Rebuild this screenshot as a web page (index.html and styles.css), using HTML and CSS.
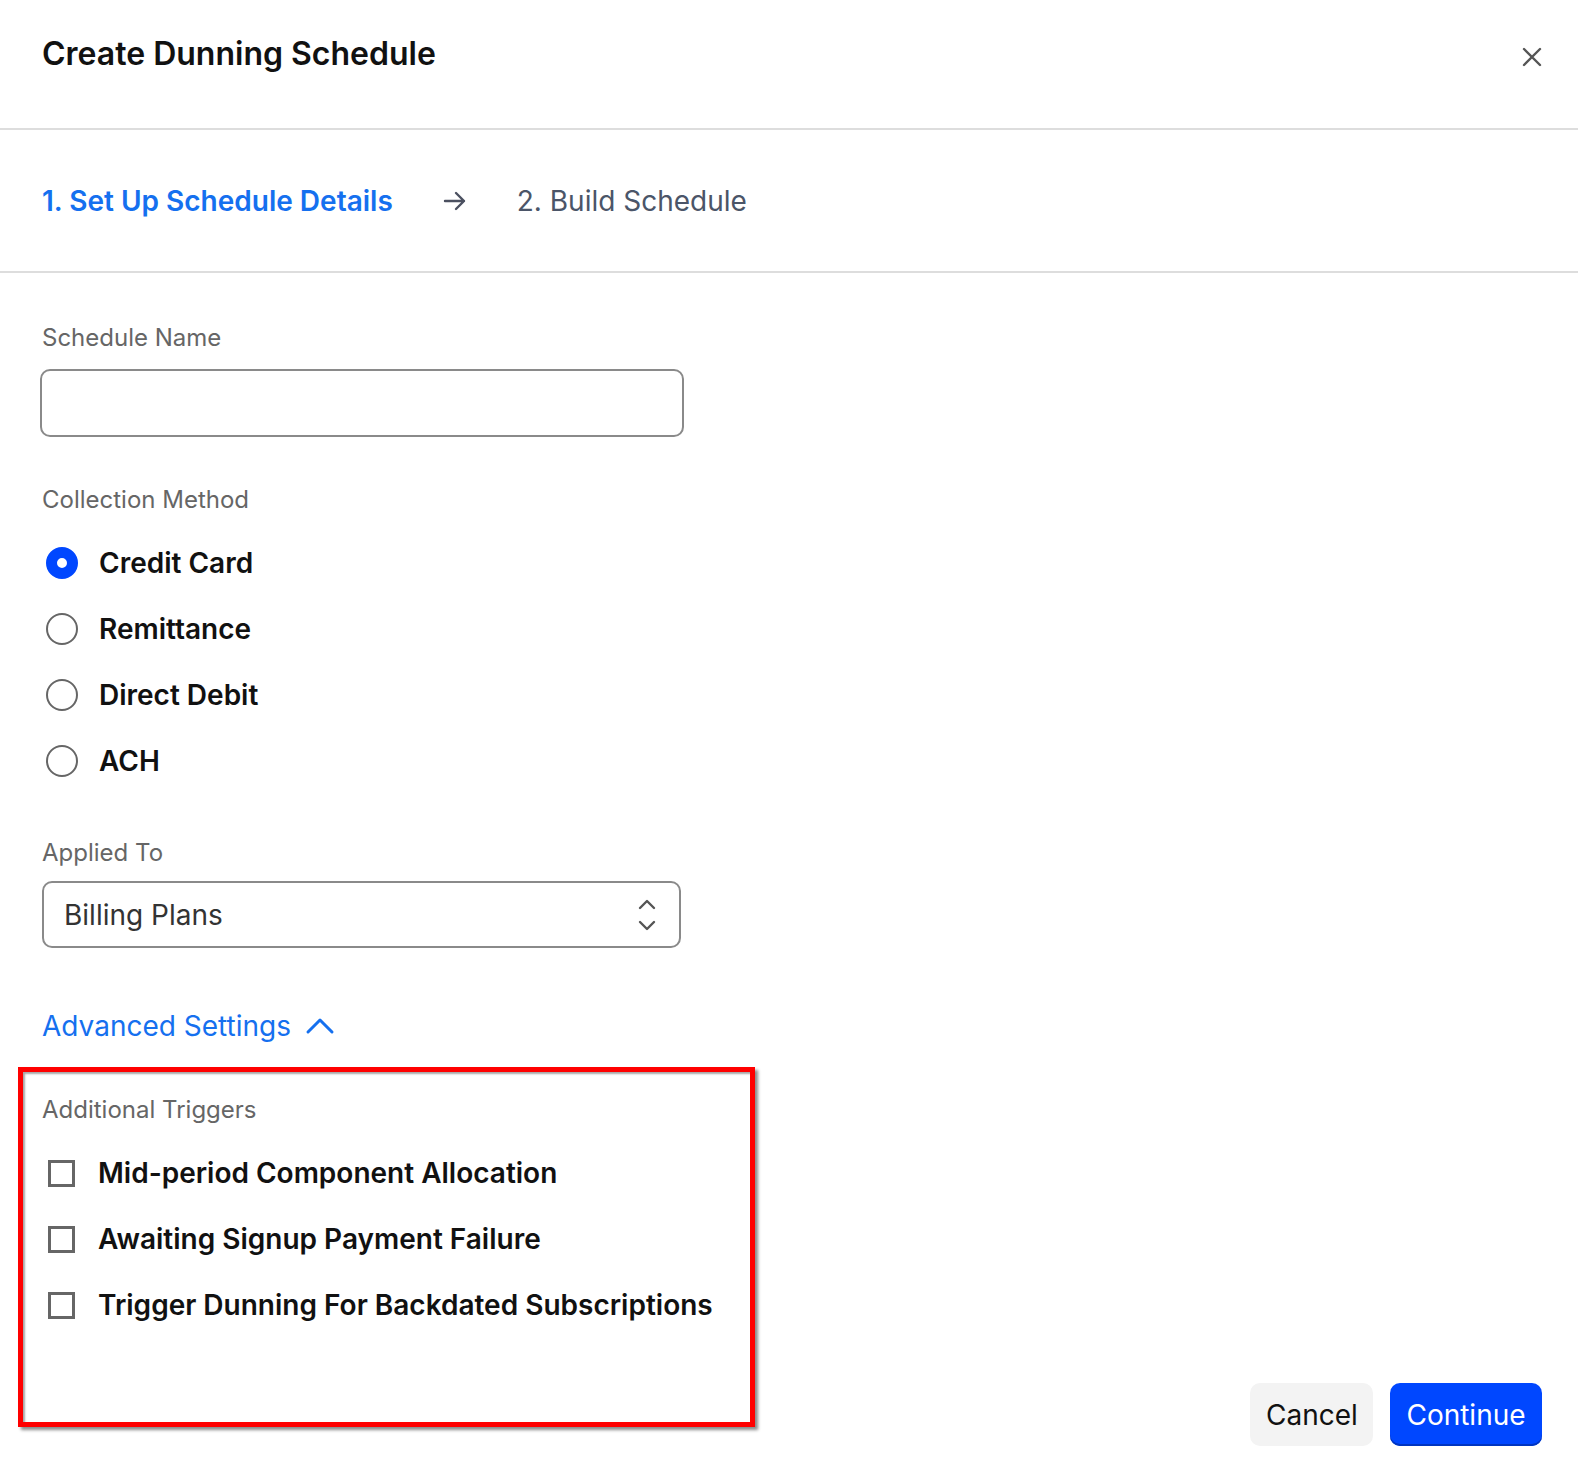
FILE: index.html
```html
<!DOCTYPE html>
<html lang="en">
<head>
<meta charset="utf-8">
<title>Create Dunning Schedule</title>
<link rel="stylesheet" href="styles.css">
</head>
<body>
<div class="modal">
  <header class="header">
    <h1 class="title">Create Dunning Schedule</h1>
    <button class="close" aria-label="Close">
      <svg width="22" height="22" viewBox="0 0 22 22"><path d="M3 3 L19 19 M19 3 L3 19" stroke="#555" stroke-width="2.4" stroke-linecap="round" fill="none"/></svg>
    </button>
  </header>
  <nav class="steps">
    <span class="step active">1. Set Up Schedule Details</span>
    <svg class="step-arrow" width="24" height="22" viewBox="0 0 24 22"><path d="M2 11 H21 M13 3 L21 11 L13 19" stroke="#4b5060" stroke-width="2.4" stroke-linecap="round" stroke-linejoin="round" fill="none"/></svg>
    <span class="step">2. Build Schedule</span>
  </nav>
  <main class="content">
    <form class="form">
      <label class="label first">Schedule Name</label>
      <div class="input"></div>

      <div class="label gap-lg">Collection Method</div>
      <div class="radios">
        <div class="radio-row"><span class="radio checked"></span><span class="opt">Credit Card</span></div>
        <div class="radio-row"><span class="radio"></span><span class="opt">Remittance</span></div>
        <div class="radio-row"><span class="radio"></span><span class="opt">Direct Debit</span></div>
        <div class="radio-row"><span class="radio"></span><span class="opt">ACH</span></div>
      </div>

      <div class="label applied">Applied To</div>
      <div class="select">
        <span class="select-value">Billing Plans</span>
        <svg width="20" height="34" viewBox="0 0 20 34"><path d="M3 10 L10 3 L17 10 M3 24 L10 31 L17 24" stroke="#555" stroke-width="2.4" stroke-linecap="round" stroke-linejoin="round" fill="none"/></svg>
      </div>

      <div class="advanced">
        <span>Advanced Settings</span>
        <svg width="30" height="20" viewBox="0 0 30 20"><path d="M3 16 L15 4 L27 16" stroke="#1570ef" stroke-width="3" stroke-linecap="round" stroke-linejoin="round" fill="none"/></svg>
      </div>

      <section class="triggers">
        <div class="label trig-label">Additional Triggers</div>
        <div class="check-row"><span class="checkbox"></span><span class="opt">Mid-period Component Allocation</span></div>
        <div class="check-row"><span class="checkbox"></span><span class="opt">Awaiting Signup Payment Failure</span></div>
        <div class="check-row"><span class="checkbox"></span><span class="opt">Trigger Dunning For Backdated Subscriptions</span></div>
      </section>
    </form>
    <div class="actions">
      <button class="btn cancel">Cancel</button>
      <button class="btn continue">Continue</button>
    </div>
  </main>
</div>
</body>
</html>
```

FILE: styles.css
```css
* { box-sizing: border-box; }
html, body { margin: 0; padding: 0; background: #fff; }
body {
  font-family: Inter, "Noto Sans", "Liberation Sans", sans-serif;
  color: #111;
  width: 1578px;
}
.modal { width: 1578px; }

.header {
  height: 130px;
  border-bottom: 2px solid #dddddd;
  display: flex;
  align-items: flex-start;
  justify-content: space-between;
  padding: 34px 35px 0 42px;
}
.title {
  margin: 0;
  font-size: 32px;
  line-height: 40px;
  font-weight: 600;
  color: #111;
}
.close {
  border: 0;
  background: none;
  padding: 0;
  margin-top: 12px;
  width: 22px;
  height: 22px;
  display: flex;
}

.steps {
  height: 143px;
  border-bottom: 2px solid #dddddd;
  display: flex;
  align-items: center;
  padding-left: 42px;
}
.step {
  font-size: 28px;
  line-height: 36px;
  color: #4b5568;
  font-weight: 400;
}
.step.active { color: #1570ef; font-weight: 600; }
.step-arrow { margin: 0 50px; }

.content {
  display: grid;
  grid-template-columns: 1fr auto;
  padding: 0 36px 0 0;
}
.form {
  display: flex;
  flex-direction: column;
  align-items: flex-start;
  padding-left: 42px;
  padding-bottom: 19px;
}
.label {
  font-size: 24px;
  line-height: 30px;
  color: #666;
  font-weight: 400;
}
.label.first { margin-top: 50px; }
.input {
  margin-top: 16px;
  margin-left: -2px;
  width: 644px;
  height: 68px;
  border: 2px solid #8a8a8a;
  border-radius: 10px;
}
.gap-lg { margin-top: 48px; }
.radios { margin-top: 15px; display: flex; flex-direction: column; }
.radio-row, .check-row {
  height: 66px;
  display: flex;
  align-items: center;
}
.radio {
  width: 32px;
  height: 32px;
  border-radius: 50%;
  border: 2.5px solid #666;
  margin-left: 4px;
  margin-right: 21px;
  flex: none;
}
.radio.checked {
  border: 11px solid #0047ff;
}
.opt {
  font-size: 28px;
  line-height: 36px;
  font-weight: 600;
  color: #111;
}
.applied { margin-top: 44px; }
.select {
  margin-top: 13px;
  width: 639px;
  height: 67px;
  border: 2px solid #8a8a8a;
  border-radius: 10px;
  display: flex;
  align-items: center;
  justify-content: space-between;
  padding: 0 22px 0 20px;
}
.select-value {
  font-size: 28px;
  line-height: 36px;
  color: #333;
}
.advanced {
  margin-top: 61px;
  display: flex;
  align-items: center;
  gap: 14px;
  font-size: 28px;
  line-height: 34px;
  color: #1570ef;
}
.triggers {
  margin-top: 24px;
  margin-left: -24px;
  width: 737px;
  border: 5px solid #ff0000;
  padding: 23px 0 84px 19px;
  box-shadow: 3px 3px 3px rgba(0,0,0,0.45), inset 2px 2px 2px rgba(0,0,0,0.35);
}
.trig-label { margin-bottom: 15px; }
.checkbox {
  width: 27px;
  height: 27px;
  border: 3px solid #666;
  margin-left: 6px;
  margin-right: 23px;
  flex: none;
}

.actions {
  align-self: end;
  display: flex;
  gap: 17px;
}
.btn {
  height: 63px;
  border-radius: 10px;
  border: 0;
  font-family: Inter, "Noto Sans", sans-serif;
  font-size: 28px;
  padding: 0 16px;
  cursor: pointer;
}
.cancel { background: #f3f3f3; color: #111; width: 123px; }
.continue {
  background: #0047ff;
  color: #fff;
  width: 152px;
  box-shadow: inset 0 -2px 0 #0035c0;
}
```
